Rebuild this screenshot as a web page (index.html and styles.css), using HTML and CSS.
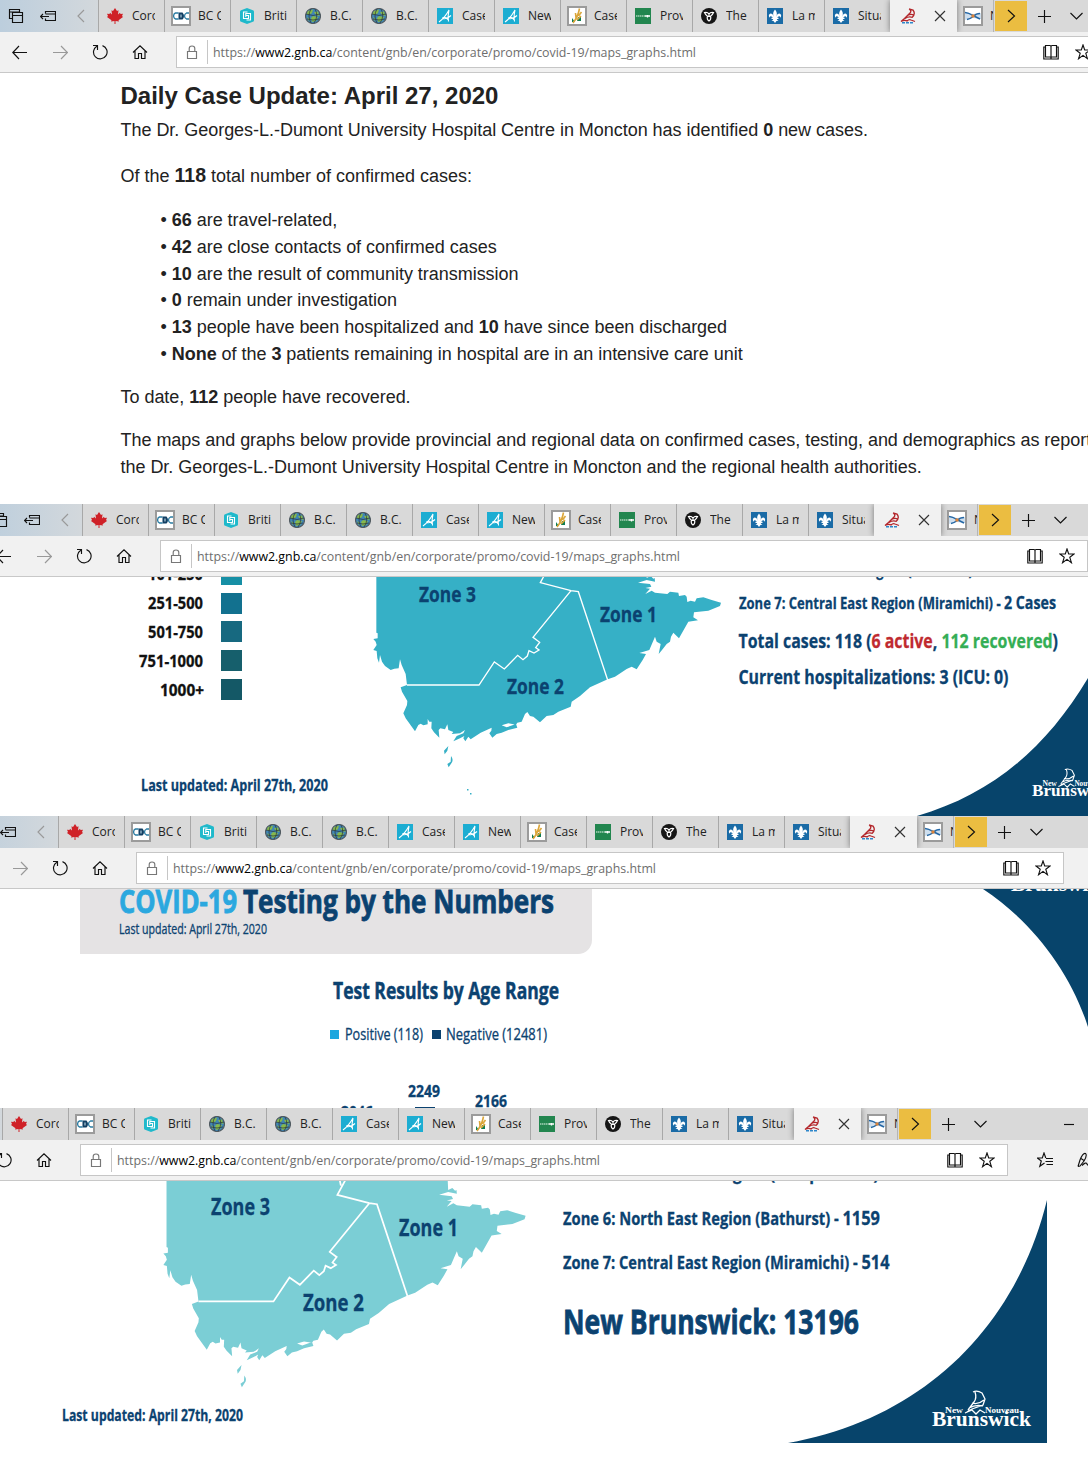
FILE: index.html
```html
<!DOCTYPE html>
<html lang="en">
<head>
<meta charset="utf-8">
<title>Daily Case Update: April 27, 2020</title>
<link rel="stylesheet" href="styles.css">
</head>
<body>

<svg class="defs" width="0" height="0" aria-hidden="true">
  <symbol id="i-tabs" viewBox="0 0 16 16"><path d="M4 10.5H1.500V1.500H11.500V4M1.500 4H11" /><path d="M4.500 4.500H14.500V14.500H4.500ZM4.500 7.500H14.500"/></symbol>
  <symbol id="i-aside" viewBox="0 0 16 16"><path d="M5.500 5.500V3.500H15.500V12.500H5.500V10.500M5.500 6H15.500M.5 8.500H9M3 6L.5 8.500L3 11"/></symbol>
  <symbol id="i-left" viewBox="0 0 16 16"><path d="M12 2L6 8L12 14"/></symbol>
  <symbol id="i-right" viewBox="0 0 16 16"><path d="M5 2L11.500 8L5 14"/></symbol>
  <symbol id="i-down" viewBox="0 0 16 16"><path d="M2.500 5L8.500 11L14.500 5"/></symbol>
  <symbol id="i-plus" viewBox="0 0 16 16"><path d="M2 8.500H15M8.500 2V15"/></symbol>
  <symbol id="i-close" viewBox="0 0 16 16"><path d="M3 3L13 13M13 3L3 13"/></symbol>
  <symbol id="i-min" viewBox="0 0 16 16"><path d="M3 8.500H13"/></symbol>
  <symbol id="i-back" viewBox="0 0 16 16"><path d="M.5 8.500H15M7 2L.8 8.500L7 15"/></symbol>
  <symbol id="i-forward" viewBox="0 0 16 16"><path d="M1 8.500H16M9 2L15.400 8.500L9 15"/></symbol>
  <symbol id="i-refresh" viewBox="0 0 16 16"><path d="M10.500 1.600A6.800 6.800 0 1 1 4.800 2.200M1 1.500H5.500V6"/></symbol>
  <symbol id="i-home" viewBox="0 0 16 16"><path d="M1 8.500L8 1.800L15 8.500M3 7V14.500H6.500V9.500H9.500V14.500H13V7"/></symbol>
  <symbol id="i-lock" viewBox="0 0 16 16"><path d="M3.500 7.500H12.500V14.500H3.500ZM5.200 7.500V4.500Q5.200 2 8 2Q10.800 2 10.800 4.500V7.500"/></symbol>
  <symbol id="i-book" viewBox="0 0 16 16"><path d="M2.500 1.500H7Q8 1.500 8 2.500V13.500Q7.600 13 7 13H2.500ZM13.500 1.500H9Q8 1.500 8 2.500V13.500Q8.400 13 9 13H13.500ZM2.500 3H.8V15H15.200V3H13.500"/></symbol>
  <symbol id="i-star" viewBox="0 0 16 16"><path d="M8 1L9.700 6H15.200L10.800 9.300L12.400 14.700L8 11.400L3.600 14.700L5.200 9.300L.8 6H6.300Z"/></symbol>
  <symbol id="i-favs" viewBox="0 0 16 16"><path d="M9 6.500H16M8.500 9.500H16M9.500 12.500H16M8.800 6L7 1L5.300 6H.3L4.300 9L2.800 14.300L7.500 11"/></symbol>
  <symbol id="i-pen" viewBox="0 0 16 16"><path d="M1 14.500L3 8Q6 .5 8.500 1.500Q10.500 3 7 9L3 14L1 14.500M5 13.500Q9 9.500 10 12Q11 14.500 16 12.500M4 6.500L7 8.500"/></symbol>

  <symbol id="f-leaf" viewBox="0 0 16 16"><path fill="#cf2127" d="M8 0L10 3L11.500 2.300L11 6.500L13 4.800L13.500 6L16 5.700L15 8L16 9L11.500 12.300L12 13.500L8.500 13V16H7.500V13L4 13.500L4.500 12.300L0 9L1 8L0 5.700L2.500 6L3 4.800L5 6.500L4.500 2.300L6 3Z"/></symbol>
  <symbol id="f-cdc" viewBox="0 0 16 16"><path fill="#fff" d="M0 0H16V16H0Z"/><path fill="#123f63" d="M5.500 4.500H9.500Q11 6 11 8Q11 10 9.500 11.500H5.500Z"/><path fill="none" stroke="#2a7ca3" stroke-width="1.300" d="M5.500 5H2.500Q.6 5.500 .6 8Q.6 10.500 2.500 11H5.500M16 5H13.500Q11.500 6 11.500 8Q11.500 10 13.500 11H16"/><path fill="none" stroke="#b9d3e0" d="M8 6.500V9.500"/></symbol>
  <symbol id="f-hex" viewBox="0 0 16 16"><path fill="#1fb9cb" d="M8 0L14.500 2.500Q15 3 15 4V12Q15 13 14.500 13.500L8 16L1.500 13.500Q1 13 1 12V4Q1 3 1.500 2.500Z"/><path fill="none" stroke="#fff" stroke-width="1.100" d="M8.500 4H4.500V10.500H9.500V7.500H7M7.500 12H11.500V5.500H6.800V9"/></symbol>
  <symbol id="f-globe" viewBox="0 0 16 16"><circle cx="8" cy="8" r="7.500" fill="#3f86b5" stroke="#505a60"/><path fill="#86b84c" d="M3 3L8 1.500L7 5L4 7L1.500 6ZM9 4L13 3.500L14.500 8L11 7ZM8 8L13 9L11 13L7 14L6 10ZM2 9L5 11L4 13Z"/><path fill="none" stroke="#26323c" stroke-width=".7" d="M1 6Q8 9 15 6M2 11Q8 13 14 11M6 .8Q2 8 6 15M10 1Q14 8 9 15"/></symbol>
  <symbol id="f-alta" viewBox="0 0 16 16"><path fill="#1cadd2" d="M0 0H16V16H0Z"/><path fill="none" stroke="#fff" stroke-width="1.100" d="M2 14Q8 9.500 12 2Q10.500 8 11.500 13.500M11 11.500Q8 8.500 6 9.500Q5 11 7.500 10.800Q11 10.500 14 7.500"/></symbol>
  <symbol id="f-sask" viewBox="0 0 16 16"><path fill="#fff" d="M0 0H16V16H0Z"/><path fill="#0f7c51" d="M3 10L6 14H3ZM9 9H12V13H8Z"/><path fill="none" stroke="#dba63a" stroke-width="1.600" d="M4 15Q9 9 10.500 .5M7 10L6.500 5M9.500 8L12.500 4M8 12L12 8"/></symbol>
  <symbol id="f-gov" viewBox="0 0 16 16"><path fill="#22864f" d="M0 0H16V16H0Z"/><path fill="none" stroke="#e8f5ec" stroke-width="1.100" stroke-dasharray="1.500 .5" d="M1 8H10"/><path stroke="#fff" stroke-width="1.300" d="M10 8H15M12.500 7V9.500"/></symbol>
  <symbol id="f-ont" viewBox="0 0 16 16"><circle cx="8" cy="8" r="8" fill="#161616"/><path fill="none" stroke="#fff" stroke-width="1.200" d="M8 8.500Q5.500 8.500 3.500 4.500Q6.500 3.800 8 6Q9.500 3.800 12.500 4.500Q10.500 8.500 8 8.500M8 6V8.500M6.500 8Q5.500 11.500 8 13Q10.500 11.500 9.500 8"/></symbol>
  <symbol id="f-que" viewBox="0 0 16 16"><path fill="#1a6ba6" d="M0 0H16V16H0Z"/><path fill="#fff" d="M8 1.500Q11 5 9.200 8.800Q10.500 4.800 13 5.800Q15 7 13.500 9.800Q13 7.800 11.500 8.500Q10.500 9 10.300 9.700H11.500V11H9.700Q10 12 11.500 12.700L9.500 13L8 15L6.500 13L4.500 12.700Q6 12 6.300 11H4.500V9.700H5.700Q5.500 9 4.500 8.500Q3 7.800 2.500 9.800Q1 7 3 5.800Q5.500 4.800 6.800 8.800Q5 5 8 1.500Z"/></symbol>
  <symbol id="f-nb" viewBox="0 0 16 16"><path fill="none" stroke="#b3262b" stroke-width="1.300" d="M9 1L13 2Q16 6 12 9.500M9 1Q12 3 10 5L4.500 10.500M7.500 7.500Q11 5.500 13.500 7M5 10.500Q9 8 12.500 9.500M4.500 10.500L1 13.500Q5 11.500 7 13Q9 11 11 12L15 13.500"/><path fill="none" stroke="#2d87cb" stroke-width="1.500" stroke-dasharray="3 1" d="M2 14.800H14"/></symbol>
  <symbol id="f-ns" viewBox="0 0 16 16"><path fill="#fff" d="M0 0H16V16H0Z"/><path fill="#cfdfee" d="M0 4L8 6L16 5V11L8 10L0 12Z"/><path fill="none" stroke="#2467a5" stroke-width="1.500" d="M0 4.500Q4 5 7 7L15 11M2 11.500Q5 11 9 8Q11 5.500 15 5.500"/><path fill="#dd8236" d="M6.500 6.500H9.500V9.500H6.500Z"/></symbol>

  <symbol id="coast" viewBox="0 -10 1100 700" overflow="visible">
    <path d="M49-20V188L53 190V205L40 207L47 215L50 225L40 240L50 243L52 265L57 278L60 255L66 275L75 288L92 300L103 296L116 295L120 268L125 285L137 312L141 345L122 352L126 365L142 393L141 405L130 430L137 445L165 484L175 465L182 461L190 466L203 463V447L208 455L215 455L214 475L222 487L238 503L236 480L241 475L255 478L262 463L265 480L280 486L275 492L300 490L315 480L310 490L290 498L280 514L300 505L313 498L310 505L316 514L325 500L332 508L362 488L395 473L394 482L388 490L397 503L410 492L425 488L445 480L472 473L468 462L440 472L425 466L445 460L468 464L472 458L485 455L495 432L502 426L510 438L520 440L540 457L560 438L580 435L595 425L632 410L635 395L660 378L690 352L743 328L765 320L800 297L815 290L830 298L848 270L858 252L838 249L868 240L885 200L890 215L902 222L896 252L906 240L920 222L930 215L933 200L940 188L957 205L985 155L1014 151L1000 142L1002 127L1045 122L1080 108L1083 98L1055 90L1030 82L1010 85L1005 95L992 92L982 96L980 80L975 75L957 78L955 68L930 65L922 72L885 68L875 62L856 72L870 56L856 54L874 50L870 42L834 38L860 30L885 35L884 24L880 26L872 18L860 24L858-20ZM265 528L262 542L254 553L252 542ZM273 558Q282 570 274 580L266 592L262 582L272 575Z"/>
    <path class="border" d="M568-12L541 38L633 62L655 65L743 330M546-14L551 11M633 62L519 202L539 217L527 233L537 240L522 249L507 242L502 258L489 269L473 256L433 297L403 276L357 345H141"/>
  </symbol>

  <symbol id="nb-logo" viewBox="0 0 100 38" overflow="visible">
    <path fill="none" stroke="#fff" stroke-width="1.300" d="M41 2Q45 0 50 3L53 9L51 15L40 19Q36 21 35 22M43 2Q45 8 42 12L36 20M40 13Q46 15 52 10M37 18Q44 14 51 16M33 23L40 20L44 24L48 20L53 23"/>
    <text class="logo-small" x="13" y="23" textLength="18" lengthAdjust="spacingAndGlyphs">New</text>
    <text class="logo-small" x="53" y="23" textLength="34" lengthAdjust="spacingAndGlyphs">Nouveau</text>
    <text class="logo-name" x="0" y="35.500" textLength="99" lengthAdjust="spacingAndGlyphs">Brunswick</text>
  </symbol>
</svg>

<!-- Browser bar, repeated at the top of every capture -->
<template id="browser-bar">
  <div class="tabs">
    <div class="tab-tools">
      <svg><use href="#i-tabs"/></svg><svg><use href="#i-aside"/></svg><svg class="dim"><use href="#i-left"/></svg>
    </div>
    <div class="tab"><svg><use href="#f-leaf"/></svg><span>Coro</span></div>
    <div class="tab framed"><svg><use href="#f-cdc"/></svg><span>BC C</span></div>
    <div class="tab"><svg><use href="#f-hex"/></svg><span>Briti</span></div>
    <div class="tab"><svg><use href="#f-globe"/></svg><span>B.C.</span></div>
    <div class="tab"><svg><use href="#f-globe"/></svg><span>B.C.</span></div>
    <div class="tab"><svg><use href="#f-alta"/></svg><span>Case</span></div>
    <div class="tab"><svg><use href="#f-alta"/></svg><span>New</span></div>
    <div class="tab framed"><svg><use href="#f-sask"/></svg><span>Case</span></div>
    <div class="tab"><svg><use href="#f-gov"/></svg><span>Prov</span></div>
    <div class="tab"><svg><use href="#f-ont"/></svg><span>The</span></div>
    <div class="tab"><svg><use href="#f-que"/></svg><span>La m</span></div>
    <div class="tab"><svg><use href="#f-que"/></svg><span>Situa</span></div>
    <div class="tab active"><svg><use href="#f-nb"/></svg><svg class="close"><use href="#i-close"/></svg></div>
    <div class="tab framed last"><svg><use href="#f-ns"/></svg><span>N</span></div>
    <div class="more"><svg><use href="#i-right"/></svg></div>
    <div class="window-tools">
      <svg><use href="#i-plus"/></svg><svg><use href="#i-down"/></svg><svg class="minimise"><use href="#i-min"/></svg>
    </div>
  </div>
  <div class="toolbar">
    <div class="nav">
      <svg><use href="#i-back"/></svg><svg class="dim"><use href="#i-forward"/></svg><svg><use href="#i-refresh"/></svg><svg><use href="#i-home"/></svg>
    </div>
    <div class="address">
      <svg class="lock"><use href="#i-lock"/></svg>
      <svg class="url" width="490" height="30"><text y="20" textLength="483" lengthAdjust="spacingAndGlyphs">https://<tspan class="host">www2.gnb.ca</tspan>/content/gnb/en/corporate/promo/covid-19/maps_graphs.html</text></svg>
      <svg class="book"><use href="#i-book"/></svg><svg><use href="#i-star"/></svg>
    </div>
    <div class="extras"><svg><use href="#i-favs"/></svg><svg><use href="#i-pen"/></svg></div>
  </div>
</template>

<section class="shot shot-update">
  <header class="browser"></header>
  <article class="update">
    <h1>Daily Case Update: April 27, 2020</h1>
    <p>The Dr. Georges-L.-Dumont University Hospital Centre in Moncton has identified <b>0</b> new cases.</p>
    <p class="total">Of the <b>118</b> total number of confirmed cases:</p>
    <ul>
      <li><b>66</b> are travel-related,</li>
      <li><b>42</b> are close contacts of confirmed cases</li>
      <li><b>10</b> are the result of community transmission</li>
      <li><b>0</b> remain under investigation</li>
      <li><b>13</b> people have been hospitalized and <b>10</b> have since been discharged</li>
      <li><b>None</b> of the <b>3</b> patients remaining in hospital are in an intensive care unit</li>
    </ul>
    <p>To date, <b>112</b> people have recovered.</p>
    <p class="intro">The maps and graphs below provide provincial and regional data on confirmed cases, testing, and demographics as reported by<br>the Dr. Georges-L.-Dumont University Hospital Centre in Moncton and the regional health authorities.</p>
  </article>
</section>

<section class="shot shot-cases">
  <header class="browser"></header>
  <div class="panel">
    <div class="side">
      <div class="scale">
        <div class="step"><svg width="55" height="20"><text y="16" textLength="55" lengthAdjust="spacingAndGlyphs">101-250</text></svg><i class="s1"></i></div>
        <div class="step"><svg width="55" height="20"><text y="16" textLength="55" lengthAdjust="spacingAndGlyphs">251-500</text></svg><i class="s2"></i></div>
        <div class="step"><svg width="55" height="20"><text y="16" textLength="55" lengthAdjust="spacingAndGlyphs">501-750</text></svg><i class="s3"></i></div>
        <div class="step"><svg width="64" height="20"><text y="16" textLength="64" lengthAdjust="spacingAndGlyphs">751-1000</text></svg><i class="s4"></i></div>
        <div class="step plus"><svg width="44" height="20"><text y="16" textLength="44" lengthAdjust="spacingAndGlyphs">1000+</text></svg><i class="s5"></i></div>
      </div>
      <svg class="stamp" width="190" height="24"><text y="18" textLength="187" lengthAdjust="spacingAndGlyphs">Last updated: April 27th, 2020</text></svg>
    </div>
    <svg class="map map-cases" width="366" height="239">
      <use href="#coast" x="-13" y="-10.330" width="366.670" height="233.330"/>
      <path d="M94 212h1.500v1.500h-1.500ZM97 216h1.500v1.500h-1.500Z"/>
      <text x="46" y="24.500" textLength="57" lengthAdjust="spacingAndGlyphs">Zone 3</text>
      <text x="227" y="44.500" textLength="57" lengthAdjust="spacingAndGlyphs">Zone 1</text>
      <text x="134" y="117" textLength="57" lengthAdjust="spacingAndGlyphs">Zone 2</text>
    </svg>
    <div class="stats">
      <svg width="320" height="12"><text y="-1.500" textLength="252" lengthAdjust="spacingAndGlyphs">Zone 6: North East Region (Bathurst) - 0</text></svg>
      <svg width="320" height="34"><text y="20" textLength="317" lengthAdjust="spacingAndGlyphs">Zone 7: Central East Region (Miramichi) - <tspan class="big">2 Cases</tspan></text></svg>
      <svg width="320" height="36"><text class="large" x="-.5" y="24.500" textLength="319.500" lengthAdjust="spacingAndGlyphs">Total cases: 118 (<tspan class="red">6 active</tspan>, <tspan class="green">112 recovered</tspan>)</text></svg>
      <svg width="320" height="36"><text class="large" x="-.5" y="24.500" textLength="270" lengthAdjust="spacingAndGlyphs">Current hospitalizations: 3 (ICU: 0)</text></svg>
    </div>
    <svg class="corner" width="171" height="138"><path d="M0 138C73 117 128 72 171 0V138Z"/><use href="#nb-logo" x="115" y="90" width="80" height="30.400"/></svg>
  </div>
</section>

<section class="shot shot-tests">
  <header class="browser"></header>
  <div class="panel">
    <div class="banner">
      <svg width="440" height="33"><text class="title" y="24" textLength="118" lengthAdjust="spacingAndGlyphs">COVID-19</text><text class="title dark" x="124" y="24" textLength="311" lengthAdjust="spacingAndGlyphs">Testing by the Numbers</text></svg>
      <svg width="150" height="20"><text class="note" y="11.500" textLength="148" lengthAdjust="spacingAndGlyphs">Last updated: April 27th, 2020</text></svg>
    </div>
    <div class="chart">
      <svg width="230" height="32"><text class="heading" y="23" textLength="226" lengthAdjust="spacingAndGlyphs">Test Results by Age Range</text></svg>
      <div class="keys">
        <i class="pos"></i><svg width="78" height="20"><text y="15.500" textLength="78" lengthAdjust="spacingAndGlyphs">Positive (118)</text></svg>
        <i class="neg"></i><svg width="101" height="20"><text y="15.500" textLength="101" lengthAdjust="spacingAndGlyphs">Negative (12481)</text></svg>
      </div>
      <div class="bars">
        <div class="bar b1"><svg width="32" height="18"><text y="14" textLength="32" lengthAdjust="spacingAndGlyphs">2046</text></svg></div>
        <div class="bar b2"><svg width="32" height="18"><text y="14" textLength="32" lengthAdjust="spacingAndGlyphs">2249</text></svg><i></i></div>
        <div class="bar b3"><svg width="32" height="18"><text y="14" textLength="32" lengthAdjust="spacingAndGlyphs">2166</text></svg></div>
      </div>
    </div>
    <svg class="corner" width="105" height="138"><path d="M0 0C47 31 87 81 105 138V0Z"/><use href="#nb-logo" x="28" y="-34" width="100" height="38"/></svg>
  </div>
</section>

<section class="shot shot-regions">
  <header class="browser"></header>
  <div class="panel">
    <svg class="map map-regions" width="390" height="220">
      <use href="#coast" x="-12.500" y="-2.800" width="382" height="243.100"/>
      <text x="49" y="33.500" textLength="59" lengthAdjust="spacingAndGlyphs">Zone 3</text>
      <text x="237" y="54.500" textLength="59" lengthAdjust="spacingAndGlyphs">Zone 1</text>
      <text x="141" y="129.500" textLength="61" lengthAdjust="spacingAndGlyphs">Zone 2</text>
    </svg>
    <div class="stats">
      <svg width="330" height="20"><text y="-1.500" textLength="355" lengthAdjust="spacingAndGlyphs">Zone 5: North West Region (Campbellton) - 374</text></svg>
      <svg width="330" height="44"><text y="24" textLength="317" lengthAdjust="spacingAndGlyphs">Zone 6: North East Region (Bathurst) - <tspan class="big">1159</tspan></text></svg>
      <svg width="330" height="44"><text y="23.500" textLength="326.500" lengthAdjust="spacingAndGlyphs">Zone 7: Central East Region (Miramichi) - <tspan class="big">514</tspan></text></svg>
      <svg width="330" height="60"><text class="sum" y="44.500" textLength="296" lengthAdjust="spacingAndGlyphs">New Brunswick: 13196</text></svg>
    </div>
    <svg class="stamp" width="184" height="24"><text y="18" textLength="181" lengthAdjust="spacingAndGlyphs">Last updated: April 27th, 2020</text></svg>
    <svg class="corner" width="259" height="243"><path d="M0 243C132 220 227 130 259 0V243Z"/><use href="#nb-logo" x="144" y="190" width="100" height="38"/></svg>
  </div>
</section>

<script src="browser-bar.js"></script>
</body>
</html>
```
FILE: browser-bar.js
```js
const bar = document.getElementById("browser-bar");
document.querySelectorAll(".browser").forEach((slot) => {
  slot.appendChild(bar.content.cloneNode(true));
});
```
FILE: styles.css
```css
* { box-sizing: border-box; }
body {
  margin: 0;
  width: 1088px;
  background: #fff;
  font-family: "Liberation Sans", Arial, sans-serif;
  overflow-x: hidden;
}
svg { display: block; flex: none; }
.defs { position: absolute; }

/* Captures stacked on the page */
.shot { overflow: hidden; width: 1088px; }
.shot-update { height: 504px; }
.shot-cases { height: 312px; }
.shot-tests { height: 292px; }
.shot-regions { height: 352px; }
.shot-cases .browser { margin-left: -16px; }
.shot-tests .browser { margin-left: -40px; }
.shot-regions .browser { margin-left: -96px; }

/* Browser bar */
.browser {
  width: 1300px;
  height: 73px;
  background: #f1f1f1;
  border-bottom: 1px solid #c8c8c8;
  font-family: "Open Sans", "Noto Sans", sans-serif;
}
.browser svg { width: 16px; height: 16px; fill: none; stroke: #111; stroke-width: 1.15; }
.browser .dim { stroke: #999; }
.tabs { display: flex; height: 32px; background: #d9d9d9; }
.tab-tools {
  display: flex;
  gap: 16px;
  align-items: center;
  width: 98px;
  padding-left: 8px;
  background: linear-gradient(90deg, #bccedd, #d3d8dc);
}
.tab {
  display: flex;
  align-items: center;
  width: 66px;
  padding-left: 8px;
  border-left: 1px solid #a8a8a8;
}
.tab svg { stroke: none; }
.tab span {
  width: 23px;
  margin-left: 9px;
  overflow: hidden;
  white-space: nowrap;
  font-size: 12px;
  line-height: 20px;
  color: #222;
}
.framed { padding-left: 6px; }
.framed svg:first-child { width: 20px; height: 20px; border: 2px solid #9b9b9b; background: #fff; }
.framed span { margin-left: 7px; }
.tab.active {
  width: 67px;
  padding-left: 10px;
  border: 0;
  background: #f1f1f1;
  box-shadow: 0 0 6px rgba(0, 0, 0, .45);
  clip-path: inset(0 -7px);
}
.tab.active .close { margin-left: 16px; stroke: #333; }
.tab.last { width: 37px; border-left: 0; border-right: 1px solid #b5b5b5; overflow: hidden; }
.tab.last span { width: 4px; }
.more {
  display: flex;
  justify-content: center;
  align-items: center;
  width: 32px;
  height: 30px;
  margin: 1px 0 0 1px;
  background: #ebbd41;
}
.window-tools { display: flex; align-items: center; gap: 16px; padding-left: 9px; }
.window-tools .minimise { margin-left: 57px; }
.toolbar { display: flex; height: 40px; align-items: center; }
.nav { display: flex; gap: 24px; width: 176px; padding-left: 12px; }
.address {
  display: flex;
  align-items: center;
  width: 928px;
  height: 32px;
  padding-right: 12px;
  border: 1px solid #c6c6c6;
  background: #fff;
}
.browser .lock { width: 31px; height: 24px; padding: 4px 7px; border-right: 1px solid #c6c6c6; stroke: #777; }
.browser .url { width: 490px; height: 30px; margin-left: 5px; stroke: none; }
.url text { font-size: 13px; fill: #6e6e6e; }
.url .host { fill: #000; }
.book { margin-left: auto; margin-right: 16px; }
.extras { display: flex; gap: 24px; padding-left: 29px; }

/* Written update */
.update {
  padding: 8px 0 0 120.5px;
  color: #222;
  font-size: 18px;
  line-height: 27px;
  letter-spacing: -.033px;
  white-space: nowrap;
}
.update h1 { margin: 0 0 6px; font-size: 24px; line-height: 30px; letter-spacing: 0; }
.update p { margin: 0; }
.update .total { margin-top: 19px; letter-spacing: 0; }
.total b { font-size: 19.5px; line-height: 20px; }
.update ul { margin: 17px 0 16px; padding: 0 0 0 40px; list-style: none; line-height: 26.8px; }
.update li::before { content: "• "; }
.update .intro { margin-top: 16px; }

/* Infographic panels */
.panel {
  position: relative;
  display: flex;
  width: 1088px;
  overflow: hidden;
  font-family: "Open Sans", "Noto Sans", sans-serif;
  font-weight: 700;
}
.panel svg { overflow: visible; }
.panel text { fill: #0b4270; stroke: #0b4270; stroke-width: .3px; }
.corner { position: absolute; }
.corner > path { fill: #07446b; }
.logo-name { fill: #fff; font: 700 20px "Liberation Serif", serif; }
.logo-small { fill: #fff; font: 700 9px "Liberation Serif", serif; }
.border { fill: none; stroke: #fff; }
.stamp text { font-size: 16.5px; }

.shot-cases .panel { height: 239px; }
.side { width: 373px; }
.scale { width: 242px; margin-top: -17px; }
.step { display: flex; justify-content: flex-end; align-items: center; gap: 18px; height: 28.8px; }
.step i { width: 21px; height: 21px; }
.step.plus { gap: 17px; }
.step text { font-size: 16.5px; fill: #111; stroke: #111; }
.s1 { background: #168fa5; }
.s2 { background: #12718f; }
.s3 { background: #176980; }
.s4 { background: #165f6c; }
.s5 { background: #145866; }
.side .stamp { margin: 69px 0 0 141px; }
.map-cases { fill: #36b0c6; stroke-width: 4; }
.map-cases text { font-size: 22px; }
.shot-cases .stats text { font-size: 16px; }
.shot-cases .stats .big { font-size: 17.5px; }
.shot-cases .stats .large { font-size: 20px; }
.stats .red { fill: #bf2a30; stroke: #bf2a30; }
.stats .green { fill: #34ae55; stroke: #34ae55; }
.shot-cases .corner { right: 0; bottom: 0; }

.shot-tests .panel { display: block; height: 219px; }
.banner {
  width: 512px;
  height: 65px;
  padding-left: 39px;
  margin-left: 80px;
  border-radius: 0 0 14px 0;
  background: #e5e3e4;
}
.banner .title { font-size: 32px; fill: #2ba8df; stroke: #2ba8df; stroke-width: .8px; }
.banner .dark { fill: #0b4270; stroke: #0b4270; }
.banner .note { font-size: 14px; font-weight: 500; }
.chart { padding: 22px 0 0 330px; }
.chart > svg { margin-left: 3px; }
.chart .heading { font-size: 22.5px; stroke-width: .5px; }
.keys { display: flex; align-items: center; margin-top: 16px; }
.keys i { width: 9px; height: 9px; }
.keys .pos { background: #1ba7df; margin-right: 6px; }
.keys .neg { background: #0b4270; margin: 0 5px 0 9px; }
.keys text { font-size: 16px; font-weight: 500; }
.bars { display: flex; gap: 35px; margin: 39px 0 0 11px; }
.bar text { font-size: 16px; }
.b1 { padding-top: 21px; }
.b3 { padding-top: 10px; }
.b2 i { display: block; width: 20px; height: 30px; margin: 6px 0 0 7px; background: #0b4270; }
.shot-tests .corner { right: 0; top: 0; }

.shot-regions .panel { flex-wrap: wrap; align-content: flex-start; height: 279px; padding-left: 162px; }
.map-regions { fill: #7bced5; stroke-width: 5; }
.map-regions text { font-size: 23px; }
.shot-regions .stats { width: 500px; padding-left: 11px; }
.shot-regions .stats text { font-size: 17.5px; }
.shot-regions .stats .big { font-size: 19.5px; }
.shot-regions .stats .sum { font-size: 33.5px; stroke-width: .8px; }
.shot-regions .stamp { margin: 2px 0 0 -100px; }
.shot-regions .corner { left: 788px; top: 19px; }
```
